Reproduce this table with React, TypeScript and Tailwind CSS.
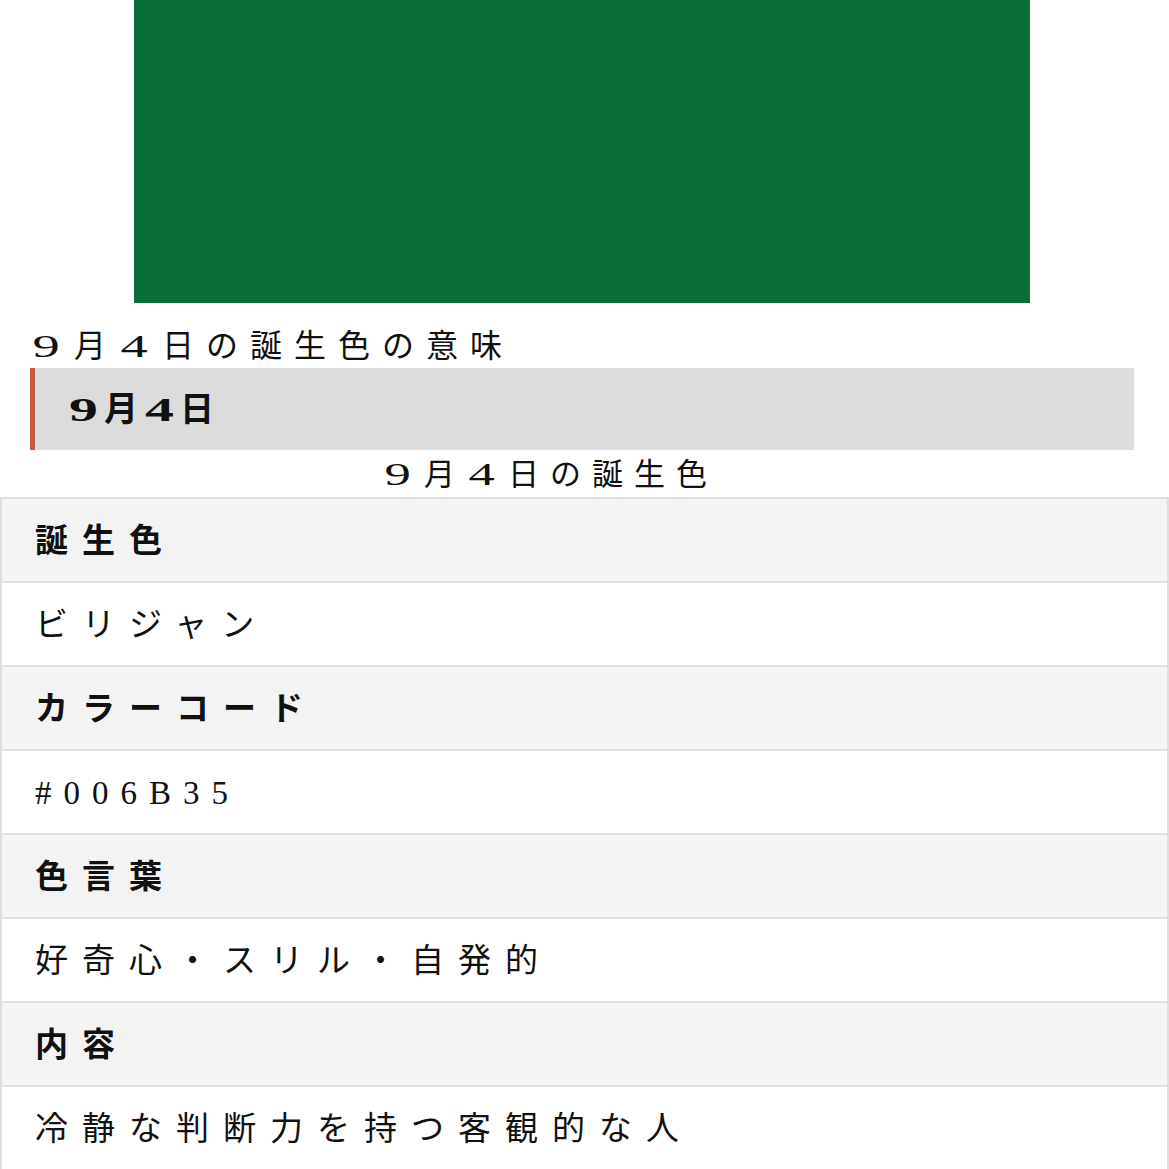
const rows: { label: string; value: string }[] = [
  { label: "誕生色", value: "ビリジャン" },
  { label: "カラーコード", value: "#006B35" },
  { label: "色言葉", value: "好奇心・スリル・自発的" },
  { label: "内容", value: "冷静な判断力を持つ客観的な人" },
];

const font = "font-['Liberation_Serif','Noto_Sans_CJK_JP',serif]";

// wide serif digit taking a full CJK cell, as in the reference
function Num({ n, box }: { n: string; box: string }) {
  return (
    <span className={`inline-block text-center tracking-normal ${box}`}>
      <span className="inline-block scale-x-[1.7]">{n}</span>
    </span>
  );
}

export default function App() {
  return (
    <div className={`w-[1169px] bg-white text-[#111] ${font}`}>
      <div className="ml-[134px] h-[303px] w-[896px] bg-[#0a6e39]" />

      <h2 className="mt-[21px] pl-[30px] text-[32px] leading-[44px] tracking-[12px]">
        <Num n="9" box="w-[32px] mr-[12px]" />月<Num n="4" box="w-[32px] mr-[12px]" />日の誕生色の意味
      </h2>

      <div className="ml-[30px] flex h-[82px] w-[1104px] items-center border-l-[5px] border-[#c75a40] bg-[#dcdcdc] pl-[31px]">
        <h3 className="text-[34px] font-bold tracking-[4px]">
          <Num n="9" box="w-[34px] mr-[4px]" />月<Num n="4" box="w-[34px] mr-[4px]" />日
        </h3>
      </div>

      <div className="pr-[69px] pt-[2px] text-center text-[31px] leading-[45px] tracking-[11px]">
        <Num n="9" box="w-[31px] mr-[11px]" />月<Num n="4" box="w-[31px] mr-[11px]" />日の誕生色
      </div>

      <div className="border-x-2 border-[#dedede]">
        {rows.map((r) => (
          <div key={r.label}>
            <div className="flex h-[84px] items-center border-t-2 border-[#dedede] bg-[#f3f3f3] pl-[33px] pt-[3px] text-[33px] font-bold tracking-[14px]">
              {r.label}
            </div>
            <div
              className={`flex h-[84px] items-center border-t-2 border-[#dedede] bg-white pl-[33px] pt-[3px] text-[33px] ${
                r.value.startsWith("#") ? "tracking-[12px]" : "tracking-[14px]"
              }`}
            >
              {r.value}
            </div>
          </div>
        ))}
      </div>
    </div>
  );
}
